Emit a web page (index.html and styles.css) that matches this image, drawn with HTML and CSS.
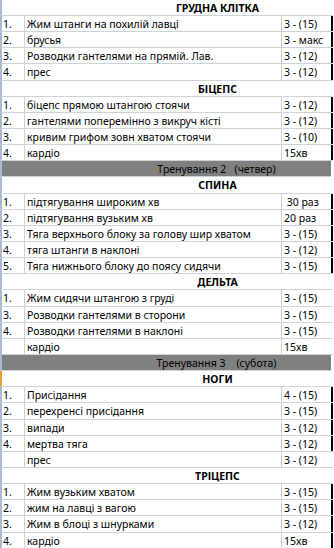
FILE: index.html
```html
<!DOCTYPE html>
<html lang="uk">
<head>
<meta charset="utf-8">
<title>Тренування</title>
<link rel="stylesheet" href="styles.css">
</head>
<body>
<div class="sheet">
  <div class="row head first"><span class="title">ГРУДНА КЛІТКА</span></div>
  <div class="row data edge"><span class="num">1.</span><span class="ex">Жим штанги на похилій лавці</span><span class="reps">3 - (15)</span></div>
  <div class="row data edge"><span class="num">2.</span><span class="ex">брусья</span><span class="reps">3 - макс</span></div>
  <div class="row data edge"><span class="num">3.</span><span class="ex">Розводки гантелями на прямій. Лав.</span><span class="reps">3 - (12)</span></div>
  <div class="row data edge"><span class="num">4.</span><span class="ex">прес</span><span class="reps">3 - (12)</span></div>

  <div class="row head"><span class="title">БІЦЕПС</span></div>
  <div class="row data edge"><span class="num">1.</span><span class="ex">біцепс прямою штангою стоячи</span><span class="reps">3 - (12)</span></div>
  <div class="row data edge"><span class="num">2.</span><span class="ex">гантелями поперемінно з викруч кісті</span><span class="reps">3 - (12)</span></div>
  <div class="row data edge"><span class="num">3.</span><span class="ex">кривим грифом зовн хватом стоячи</span><span class="reps">3 - (10)</span></div>
  <div class="row data edge"><span class="num">4.</span><span class="ex">кардіо</span><span class="reps">15хв</span></div>

  <div class="row day"><span class="title">Тренування 2   (четвер)</span></div>

  <div class="row head"><span class="title">СПИНА</span></div>
  <div class="row data edge"><span class="num">1.</span><span class="ex">підтягування широким хв</span><span class="reps"> 30 раз</span></div>
  <div class="row data edge"><span class="num">2.</span><span class="ex">підтягування вузьким хв</span><span class="reps">20 раз</span></div>
  <div class="row data edge"><span class="num">3.</span><span class="ex">Тяга верхнього блоку за голову шир хватом</span><span class="reps">3 - (15)</span></div>
  <div class="row data edge"><span class="num">4.</span><span class="ex">тяга штанги в наклоні</span><span class="reps">3 - (12)</span></div>
  <div class="row data edge"><span class="num">5.</span><span class="ex">Тяга нижнього блоку до поясу сидячи</span><span class="reps">3 - (15)</span></div>

  <div class="row head"><span class="title">ДЕЛЬТА</span></div>
  <div class="row data"><span class="num">1.</span><span class="ex">Жим сидячи штангою з груді</span><span class="reps">3 - (15)</span></div>
  <div class="row data"><span class="num">3.</span><span class="ex">Розводки гантелями в сторони</span><span class="reps">3 - (15)</span></div>
  <div class="row data"><span class="num">4.</span><span class="ex">Розводки гантелями в наклоні</span><span class="reps">3 - (15)</span></div>
  <div class="row data"><span class="num"></span><span class="ex">кардіо</span><span class="reps">15хв</span></div>

  <div class="row day"><span class="title">Тренування 3    (субота)</span></div>

  <div class="row head marked"><span class="title">НОГИ</span></div>
  <div class="row data edge"><span class="num">1.</span><span class="ex">Присідання</span><span class="reps">4 - (15)</span></div>
  <div class="row data edge"><span class="num">2.</span><span class="ex">перехренсі присідання</span><span class="reps">3 - (15)</span></div>
  <div class="row data edge"><span class="num">3.</span><span class="ex">випади</span><span class="reps">3 - (12)</span></div>
  <div class="row data edge"><span class="num">4.</span><span class="ex">мертва тяга</span><span class="reps">3 - (12)</span></div>
  <div class="row data"><span class="num"></span><span class="ex">прес</span><span class="reps">3 - (12)</span></div>

  <div class="row head"><span class="title">ТРІЦЕПС</span></div>
  <div class="row data edge"><span class="num">1.</span><span class="ex">Жим вузьким хватом</span><span class="reps">3 - (15)</span></div>
  <div class="row data edge"><span class="num">2.</span><span class="ex">жим на лавці з вагою</span><span class="reps">3 - (15)</span></div>
  <div class="row data edge"><span class="num">3.</span><span class="ex">Жим в блоці з шнурками</span><span class="reps">3 - (12)</span></div>
  <div class="row data edge last"><span class="num">4.</span><span class="ex">кардіо</span><span class="reps">15хв</span></div>
</div>
</body>
</html>
```

FILE: styles.css
```css
html, body {
  margin: 0;
  padding: 0;
  background: #ffffff;
}

body {
  font-family: "Noto Sans", "DejaVu Sans", sans-serif;
  font-size: 10.5px;
  color: #000000;
  overflow: hidden;
}

.sheet {
  width: 334px;
  display: flex;
  flex-direction: column;
}

.row {
  box-sizing: border-box;
  height: 16.15px;
  flex: 0 0 16.15px;
  border-left: 2px solid #a9bbd3;
  border-bottom: 1px solid #cbd2dc;
  width: 333px;
  padding-top: 1px;
  line-height: 14px;
  white-space: pre;
  overflow: hidden;
}

.row.first {
  height: 16px;
  flex-basis: 16px;
}

.row.last {
  border-bottom: none;
}

.data {
  display: grid;
  grid-template-columns: 23px 257px 1fr;
  padding-top: 0;
}

.num,
.ex,
.reps {
  box-sizing: border-box;
  padding-top: 1px;
}

.num {
  border-right: 1px solid #cbd2dc;
  padding-left: 1px;
}

.ex {
  border-right: 1px solid #cbd2dc;
  padding-left: 2px;
}

.reps {
  padding-left: 2px;
}

.edge .reps {
  border-right: 2px solid #000000;
}

.head,
.day {
  display: flex;
  justify-content: center;
  padding-left: 100px;
}

.head .title {
  font-weight: bold;
}

.day {
  background: #808080;
  width: 331px;
}

.marked {
  border-left-color: #f29a33;
}
```
